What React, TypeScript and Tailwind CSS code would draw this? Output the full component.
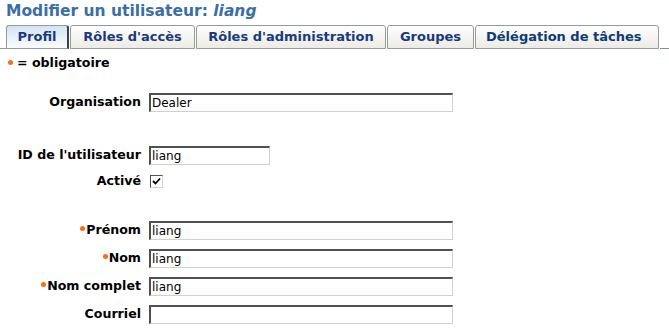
const font = { fontFamily: '"DejaVu Sans", Verdana, sans-serif' }

const tabs = [
  { label: 'Profil', w: 'w-[63px]', active: true },
  { label: "Rôles d'accès", w: 'w-[125px]' },
  { label: "Rôles d'administration", w: 'w-[190px]' },
  { label: 'Groupes', w: 'w-[87px]' },
  { label: 'Délégation de tâches', w: 'w-[184px]', light: true },
]

function Bullet() {
  return <span className="inline-block w-[5px] h-[5px] rounded-full bg-[#ff6a1a] mr-[1px] mb-[2px]" />
}

function Field({ label, value = '', wide = true, req = false }: { label: string; value?: string; wide?: boolean; req?: boolean }) {
  return (
    <div className="flex items-center h-[28px]">
      <div className="w-[141px] text-right text-[12.6px] font-bold text-black flex items-center justify-end">
        {req && <Bullet />}
        {label}
      </div>
      <div
        className={`ml-[8px] h-[19px] ${wide ? 'w-[304px]' : 'w-[121px]'} border-t-2 border-l-2 border-b border-r border-t-[#505050] border-l-[#505050] border-b-[#d4d0c8] border-r-[#d4d0c8] bg-white text-[12px] leading-[16px] pl-[1px] text-black`}
      >
        {value}
      </div>
    </div>
  )
}

export default function App() {
  return (
    <div className="w-[669px] h-[335px] bg-white overflow-hidden" style={font}>
      <div className="pl-[6px] h-[24px] text-[15.5px] font-bold text-[#3a6ea5] leading-[22px]">
        Modifier un utilisateur: <i>liang</i>
      </div>

      <div className="flex items-end h-[25px]">
        <div className="w-[6px] h-full border-b border-[#919b9c]" />
        {tabs.map((t) => (
          <div
            key={t.label}
            className={`${t.w} h-[24px] mr-[1px] rounded-t-[3px] border border-[#919b9c] flex items-center text-[13px] ${
              t.light ? 'justify-start pl-[10px] font-semibold text-[#0f3a78]' : 'justify-center font-bold text-[#1a3a80]'
            } ${
              t.active
                ? 'bg-gradient-to-b from-[#d4e4f4] to-[#fafcfe] border-r-[#404040] border-r-2'
                : 'bg-gradient-to-b from-[#fefefe] to-[#ecebe5]'
            }`}
          >
            {t.label}
          </div>
        ))}
        <div className="flex-1 h-full border-b border-[#7a8cc0]" />
      </div>

      <div className="pl-[8px] mt-[6px] h-[16px] text-[12.6px] font-bold text-black flex items-center">
        <Bullet />
        <span className="ml-[3px]">= obligatoire</span>
      </div>

      <div className="mt-[17px]">
        <Field label="Organisation" value="Dealer" />
        <div className="h-[25px]" />
        <Field label="ID de l'utilisateur" value="liang" wide={false} />
        <div className="flex items-center h-[24px]">
          <div className="w-[141px] text-right text-[12.6px] font-bold text-black">Activé</div>
          <div className="ml-[9px] w-[13px] h-[13px] border-t border-l border-b border-r border-t-[#505050] border-l-[#505050] border-b-[#d4d0c8] border-r-[#d4d0c8] bg-white flex items-center justify-center">
            <svg width="9" height="9" viewBox="0 0 9 9">
              <path d="M1 4 L3.5 6.5 L8 1.5" stroke="#000" strokeWidth="1.8" fill="none" />
            </svg>
          </div>
        </div>
        <div className="h-[23px]" />
        <Field label="Prénom" value="liang" req />
        <Field label="Nom" value="liang" req />
        <Field label="Nom complet" value="liang" req />
        <Field label="Courriel" />
      </div>
    </div>
  )
}
